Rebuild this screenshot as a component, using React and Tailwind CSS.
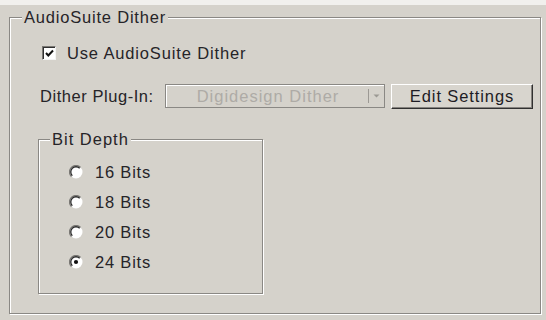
import React, { useState } from "react";

const font = { fontFamily: '"Liberation Sans", Arial, sans-serif' };

const Radio = ({ checked, label, onClick }) => (
  <div className="flex items-center h-[20px] cursor-default" onClick={onClick}>
    <svg width="14" height="14" viewBox="0 0 14 14" className="ml-[30px]">
      <circle cx="7" cy="7" r="6.5" fill="#ffffff" />
      <path d="M11.6 2.4 A6.5 6.5 0 0 0 2.4 11.6" fill="none" stroke="#7a7874" strokeWidth="1.3" />
      <path d="M10.7 3.3 A5.2 5.2 0 0 0 3.3 10.7" fill="none" stroke="#2a2a2a" strokeWidth="1.3" />
      {checked && <circle cx="7" cy="7" r="2.1" fill="#111111" />}
    </svg>
    <span className="ml-[12px] text-[#262428] tracking-[0.8px]">{label}</span>
  </div>
);

export default function App() {
  const [useDither, setUseDither] = useState(true);
  const [bits, setBits] = useState(24);

  return (
    <div className="w-[546px] h-[320px] bg-[#d5d2cb] overflow-hidden text-[16.5px] leading-[18px]" style={font}>
      <div className="h-[5px] bg-[#f1f0ed]" />
      <fieldset className="ml-[9px] mt-[3px] w-[532px] h-[306px] border border-[#8a8884] shadow-[inset_1px_1px_0_#ffffff,1px_1px_0_#ffffff]">
        <legend className="ml-[12px] px-[2px] bg-[#d5d2cb] text-[#262428] tracking-[0.8px]">AudioSuite Dither</legend>

        <div className="flex items-center h-[18px] mt-[18px] ml-[32px] cursor-default" onClick={() => setUseDither(!useDither)}>
          <div className="w-[14px] h-[14px] bg-white border border-t-[#7a7874] border-l-[#7a7874] border-r-[#f4f4f4] border-b-[#f4f4f4] shadow-[inset_1px_1px_0_#303030] flex items-center justify-center">
            {useDither && (
              <svg width="9" height="9" viewBox="0 0 9 9">
                <path d="M1 4 L3.3 6.5 L8 1.5" fill="none" stroke="#111111" strokeWidth="2" />
              </svg>
            )}
          </div>
          <span className="ml-[11px] text-[#262428] tracking-[0.85px]">Use AudioSuite Dither</span>
        </div>

        <div className="flex items-center mt-[22px] ml-[30px] h-[24px]">
          <span className="w-[125px] text-[#262428] tracking-[0.55px]">Dither Plug-In:</span>
          <div className="w-[220px] h-[24px] border border-[#8a8884] shadow-[inset_1px_1px_0_#ffffff] flex items-center">
            <span className="flex-1 text-center text-[#aeaba6] pl-[2px] tracking-[1px]">Digidesign Dither</span>
            <span className="w-[16px] text-[#aeaba6] flex items-center">
              <span className="w-px h-[14px] bg-[#9c9994]" />
              <svg width="9" height="6" viewBox="0 0 9 6" className="ml-[3px]">
                <path d="M1.5 1.5 L4.5 4.5 L7.5 1.5 Z" fill="#9c9994" />
              </svg>
            </span>
          </div>
          <button className="ml-[6px] w-[142px] h-[25px] bg-[#d8d5ce] border border-t-[#ffffff] border-l-[#ffffff] border-r-[#303030] border-b-[#303030] shadow-[inset_-1px_-1px_0_#85827e] text-[#1e1c24] tracking-[0.9px] flex items-center justify-center">
            Edit Settings
          </button>
        </div>

        <fieldset className="mt-[22px] ml-[28px] w-[225px] h-[164px] border border-[#8a8884] shadow-[inset_1px_1px_0_#ffffff,1px_1px_0_#ffffff]">
          <legend className="ml-[11px] px-[2px] bg-[#d5d2cb] text-[#262428] tracking-[1px]">Bit Depth</legend>
          <div className="mt-[14px] flex flex-col gap-[10px]">
            {[16, 18, 20, 24].map((b) => (
              <Radio key={b} checked={bits === b} label={`${b} Bits`} onClick={() => setBits(b)} />
            ))}
          </div>
        </fieldset>
      </fieldset>
    </div>
  );
}
